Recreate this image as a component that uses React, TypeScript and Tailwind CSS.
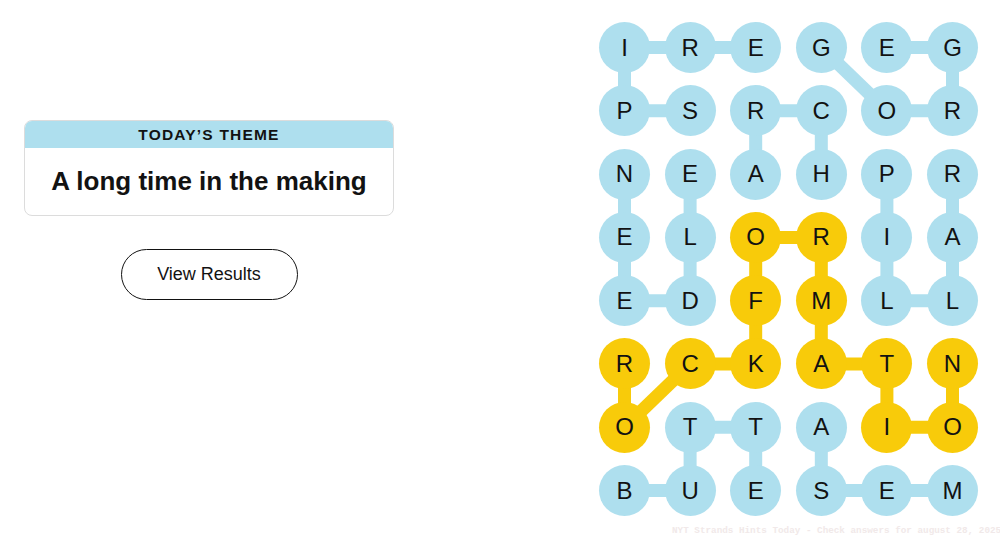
import React from 'react';

// board letters, row by row
const rows = ['IREGEG', 'PSRCOR', 'NEAHPR', 'ELORIA', 'EDFMLL', 'RCKATN', 'OTTAIO', 'BUESEM'];

// found words (spangram + theme words) are drawn in yellow
const yellow = new Set(['3,2', '3,3', '4,2', '4,3', '5,0', '5,1', '5,2', '5,3', '5,4', '5,5', '6,0', '6,4', '6,5']);

// [r1, c1, r2, c2]
const links: [number, number, number, number][] = [
  [0, 0, 0, 1], [0, 1, 0, 2], [0, 3, 1, 4], [0, 4, 0, 5], [0, 0, 1, 0], [0, 5, 1, 5],
  [1, 0, 1, 1], [1, 2, 1, 3], [1, 4, 1, 5], [1, 2, 2, 2], [1, 3, 2, 3],
  [2, 0, 3, 0], [2, 1, 3, 1], [2, 4, 3, 4], [2, 5, 3, 5],
  [3, 2, 3, 3], [3, 0, 4, 0], [3, 1, 4, 1], [3, 2, 4, 2], [3, 3, 4, 3], [3, 4, 4, 4], [3, 5, 4, 5],
  [4, 0, 4, 1], [4, 4, 4, 5], [4, 2, 5, 2], [4, 3, 5, 3],
  [5, 0, 6, 0], [5, 1, 5, 2], [6, 0, 5, 1], [5, 3, 5, 4], [5, 4, 6, 4], [5, 5, 6, 5],
  [6, 1, 6, 2], [6, 4, 6, 5], [6, 1, 7, 1], [6, 2, 7, 2], [6, 3, 7, 3],
  [7, 0, 7, 1], [7, 3, 7, 4], [7, 4, 7, 5],
];

const cx = (c: number) => 25.5 + c * 65.6;
const cy = (r: number) => 25.5 + r * 63.3;

function Board() {
  return (
    <div className="relative w-[379px] h-[494px]">
      <svg className="absolute inset-0" width="379" height="494">
        {links.map(([r1, c1, r2, c2], i) => (
          <line
            key={i}
            x1={cx(c1)}
            y1={cy(r1)}
            x2={cx(c2)}
            y2={cy(r2)}
            stroke={yellow.has(`${r1},${c1}`) && yellow.has(`${r2},${c2}`) ? '#f8cb0a' : '#aedfee'}
            strokeWidth={13}
          />
        ))}
      </svg>
      <div className="relative grid grid-cols-[repeat(6,51px)] gap-x-[14.6px] gap-y-[12.3px]">
        {rows.map((row, r) =>
          row.split('').map((ch, c) => (
            <div
              key={`${r}-${c}`}
              className={`w-[51px] h-[51px] rounded-full flex items-center justify-center text-[24px] text-[#121212] ${
                yellow.has(`${r},${c}`) ? 'bg-[#f8cb0a]' : 'bg-[#aedfee]'
              }`}
            >
              {ch}
            </div>
          ))
        )}
      </div>
    </div>
  );
}

export default function App() {
  return (
    <div className="relative w-[1000px] h-[537px] bg-white overflow-hidden font-['Liberation_Sans',Arial,sans-serif]">
      <div className="flex">
        <div className="ml-[24px] mt-[120px] w-[370px] flex flex-col items-center">
          <div className="w-full rounded-[8px] border border-[#dcdcdc] overflow-hidden">
            <div className="h-[27px] bg-[#aedfee] flex items-center justify-center text-[15.5px] font-bold tracking-[1.2px] text-[#121212]">
              TODAY’S THEME
            </div>
            <div className="h-[67px] flex items-center justify-center text-[26px] font-bold text-[#121212]">
              A long time in the making
            </div>
          </div>
          <button className="mt-[33px] w-[177px] h-[51px] rounded-full border border-[#121212] text-[18px] text-[#121212] bg-white">
            View Results
          </button>
        </div>
        <div className="ml-[205px] mt-[22px]">
          <Board />
        </div>
      </div>
      <div className="absolute left-[672px] top-[524px] whitespace-nowrap text-[9.3px] font-bold font-['Liberation_Mono',monospace] text-[#f1e9e9]">
        NYT Strands Hints Today - Check answers for august 28, 2025
      </div>
    </div>
  );
}
